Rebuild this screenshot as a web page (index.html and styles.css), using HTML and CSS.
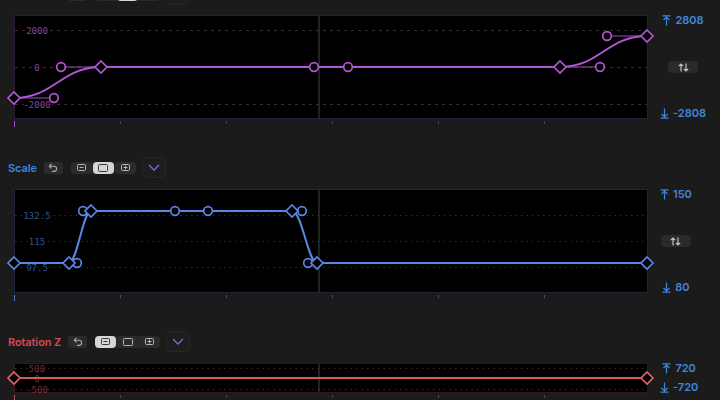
FILE: index.html
```html
<!DOCTYPE html>
<html>
<head>
<meta charset="utf-8">
<link rel="stylesheet" href="styles.css">
</head>
<body>
<div class="page">

  <section class="track purple first">
    <div class="head">
      <span class="label ghost"></span>
      <span class="undo"><svg width="10" height="9" viewBox="0 0 10 9"><path d="M3.5 1 L1.3 3.2 L3.5 5.4 M1.3 3.2 H6 A2.6 2.6 0 0 1 6 8.4 H4" fill="none" stroke="currentColor" stroke-width="1.1"/></svg></span>
      <span class="seg">
        <span class="btn"><svg width="9" height="7" viewBox="0 0 9 7"><rect x="0.5" y="0.5" width="8" height="6" rx="1" fill="none" stroke="currentColor"/><path d="M2.5 3.5 H6.5" stroke="currentColor"/></svg></span>
        <span class="btn on"><svg width="10" height="8" viewBox="0 0 10 8"><rect x="0.5" y="0.5" width="9" height="7" rx="1" fill="none" stroke="currentColor"/></svg></span>
        <span class="btn"><svg width="9" height="7" viewBox="0 0 9 7"><rect x="0.5" y="0.5" width="8" height="6" rx="1" fill="none" stroke="currentColor"/><path d="M2.5 3.5 H6.5 M4.5 1.5 V5.5" stroke="currentColor"/></svg></span>
      </span>
      <span class="drop"><svg width="12" height="7" viewBox="0 0 12 7"><path d="M1 1 L6 6 L11 1" fill="none" stroke="currentColor" stroke-width="1.4"/></svg></span>
    </div>
    <div class="plot-row">
      <svg class="plot tall" width="634" height="104" viewBox="0 0 634 104">
        <rect class="frame" x="0.5" y="0.5" width="633" height="103"/>
        <g class="grid">
          <line x1="1" y1="15.5" x2="633" y2="15.5"/>
          <line x1="1" y1="52.5" x2="633" y2="52.5"/>
          <line x1="1" y1="89.5" x2="633" y2="89.5"/>
        </g>
        <g class="glabel">
          <text x="23" y="18.5">2000</text>
          <text x="23" y="55.5">0</text>
          <text x="23" y="92.5">-2000</text>
        </g>
        <line class="playhead" x1="305" y1="1" x2="305" y2="103"/>
        <g class="handles">
          <line x1="0" y1="83" x2="40" y2="83"/>
          <line x1="47" y1="52" x2="87" y2="52"/>
          <line x1="546" y1="52" x2="586" y2="52"/>
          <line x1="593" y1="21" x2="633" y2="21"/>
        </g>
        <path class="curve" d="M0 83 C40 83 47 52 87 52 L546 52 C586 52 593 21 633 21"/>
        <g class="pts">
          <circle cx="40" cy="83" r="4.3"/>
          <circle cx="47" cy="52" r="4.3"/>
          <circle cx="300" cy="52" r="4.3"/>
          <circle cx="334" cy="52" r="4.3"/>
          <circle cx="586" cy="52" r="4.3"/>
          <circle cx="593" cy="21" r="4.3"/>
          <path d="M0 77 L6 83 L0 89 L-6 83 Z"/>
          <path d="M87 46 L93 52 L87 58 L81 52 Z"/>
          <path d="M546 46 L552 52 L546 58 L540 52 Z"/>
          <path d="M633 15 L639 21 L633 27 L627 21 Z"/>
        </g>
      </svg>
      <div class="side">
        <span class="lim"><svg width="9" height="11" viewBox="0 0 9 11"><path d="M0.5 0.8 H8.5 M4.5 2 V10.5 M1.5 5 L4.5 2 L7.5 5" fill="none" stroke="currentColor" stroke-width="1.2"/></svg>2808</span>
        <span class="swap"><svg width="11" height="9" viewBox="0 0 11 9"><path d="M3 8.5 V1 M0.8 3.2 L3 1 L5.2 3.2 M8 0.5 V8 M5.8 5.8 L8 8 L10.2 5.8" fill="none" stroke="currentColor" stroke-width="1.2"/></svg></span>
        <span class="lim"><svg width="9" height="11" viewBox="0 0 9 11"><path d="M0.5 10.2 H8.5 M4.5 0.5 V9 M1.5 6 L4.5 9 L7.5 6" fill="none" stroke="currentColor" stroke-width="1.2"/></svg>-2808</span>
      </div>
    </div>
    <svg class="ticks" width="634" height="8" viewBox="0 0 634 8">
      <rect x="0" y="2" width="1" height="6" class="t0"/>
      <rect x="106" y="2" width="1" height="3"/>
      <rect x="212" y="2" width="1" height="3"/>
      <rect x="318" y="2" width="1" height="3"/>
      <rect x="424" y="2" width="1" height="3"/>
      <rect x="530" y="2" width="1" height="3"/>
    </svg>
  </section>

  <section class="track blue">
    <div class="head">
      <span class="label">Scale</span>
      <span class="undo"><svg width="10" height="9" viewBox="0 0 10 9"><path d="M3.5 1 L1.3 3.2 L3.5 5.4 M1.3 3.2 H6 A2.6 2.6 0 0 1 6 8.4 H4" fill="none" stroke="currentColor" stroke-width="1.1"/></svg></span>
      <span class="seg">
        <span class="btn"><svg width="9" height="7" viewBox="0 0 9 7"><rect x="0.5" y="0.5" width="8" height="6" rx="1" fill="none" stroke="currentColor"/><path d="M2.5 3.5 H6.5" stroke="currentColor"/></svg></span>
        <span class="btn on"><svg width="10" height="8" viewBox="0 0 10 8"><rect x="0.5" y="0.5" width="9" height="7" rx="1" fill="none" stroke="currentColor"/></svg></span>
        <span class="btn"><svg width="9" height="7" viewBox="0 0 9 7"><rect x="0.5" y="0.5" width="8" height="6" rx="1" fill="none" stroke="currentColor"/><path d="M2.5 3.5 H6.5 M4.5 1.5 V5.5" stroke="currentColor"/></svg></span>
      </span>
      <span class="drop"><svg width="12" height="7" viewBox="0 0 12 7"><path d="M1 1 L6 6 L11 1" fill="none" stroke="currentColor" stroke-width="1.4"/></svg></span>
    </div>
    <div class="plot-row">
      <svg class="plot tall" width="634" height="104" viewBox="0 0 634 104">
        <rect class="frame" x="0.5" y="0.5" width="633" height="103"/>
        <g class="grid">
          <line x1="1" y1="26.5" x2="633" y2="26.5"/>
          <line x1="1" y1="52.5" x2="633" y2="52.5"/>
          <line x1="1" y1="78.5" x2="633" y2="78.5"/>
        </g>
        <g class="glabel">
          <text x="23" y="29.5">132.5</text>
          <text x="23" y="55.5">115</text>
          <text x="23" y="81.5">97.5</text>
        </g>
        <line class="playhead" x1="305" y1="1" x2="305" y2="103"/>
        <g class="handles">
          <line x1="55" y1="74" x2="63" y2="74"/>
          <line x1="69" y1="22" x2="77" y2="22"/>
          <line x1="278" y1="22" x2="288" y2="22"/>
          <line x1="294" y1="74" x2="303" y2="74"/>
        </g>
        <path class="curve" d="M0 74 L55 74 C63 74 69 22 77 22 L278 22 C288 22 294 74 303 74 L633 74"/>
        <g class="pts">
          <circle cx="63" cy="74" r="4.3"/>
          <circle cx="69" cy="22" r="4.3"/>
          <circle cx="161" cy="22" r="4.3"/>
          <circle cx="194" cy="22" r="4.3"/>
          <circle cx="288" cy="22" r="4.3"/>
          <circle cx="294" cy="74" r="4.3"/>
          <path d="M0 68 L6 74 L0 80 L-6 74 Z"/>
          <path d="M55 68 L61 74 L55 80 L49 74 Z"/>
          <path d="M77 16 L83 22 L77 28 L71 22 Z"/>
          <path d="M278 16 L284 22 L278 28 L272 22 Z"/>
          <path d="M303 68 L309 74 L303 80 L297 74 Z"/>
          <path d="M633 68 L639 74 L633 80 L627 74 Z"/>
        </g>
      </svg>
      <div class="side">
        <span class="lim"><svg width="9" height="11" viewBox="0 0 9 11"><path d="M0.5 0.8 H8.5 M4.5 2 V10.5 M1.5 5 L4.5 2 L7.5 5" fill="none" stroke="currentColor" stroke-width="1.2"/></svg>150</span>
        <span class="swap"><svg width="11" height="9" viewBox="0 0 11 9"><path d="M3 8.5 V1 M0.8 3.2 L3 1 L5.2 3.2 M8 0.5 V8 M5.8 5.8 L8 8 L10.2 5.8" fill="none" stroke="currentColor" stroke-width="1.2"/></svg></span>
        <span class="lim"><svg width="9" height="11" viewBox="0 0 9 11"><path d="M0.5 10.2 H8.5 M4.5 0.5 V9 M1.5 6 L4.5 9 L7.5 6" fill="none" stroke="currentColor" stroke-width="1.2"/></svg>80</span>
      </div>
    </div>
    <svg class="ticks" width="634" height="8" viewBox="0 0 634 8">
      <rect x="0" y="2" width="1" height="6" class="t0"/>
      <rect x="106" y="2" width="1" height="3"/>
      <rect x="212" y="2" width="1" height="3"/>
      <rect x="318" y="2" width="1" height="3"/>
      <rect x="424" y="2" width="1" height="3"/>
      <rect x="530" y="2" width="1" height="3"/>
    </svg>
  </section>

  <section class="track red">
    <div class="head">
      <span class="label">Rotation Z</span>
      <span class="undo"><svg width="10" height="9" viewBox="0 0 10 9"><path d="M3.5 1 L1.3 3.2 L3.5 5.4 M1.3 3.2 H6 A2.6 2.6 0 0 1 6 8.4 H4" fill="none" stroke="currentColor" stroke-width="1.1"/></svg></span>
      <span class="seg">
        <span class="btn on"><svg width="9" height="7" viewBox="0 0 9 7"><rect x="0.5" y="0.5" width="8" height="6" rx="1" fill="none" stroke="currentColor"/><path d="M2.5 3.5 H6.5" stroke="currentColor"/></svg></span>
        <span class="btn"><svg width="10" height="8" viewBox="0 0 10 8"><rect x="0.5" y="0.5" width="9" height="7" rx="1" fill="none" stroke="currentColor"/></svg></span>
        <span class="btn"><svg width="9" height="7" viewBox="0 0 9 7"><rect x="0.5" y="0.5" width="8" height="6" rx="1" fill="none" stroke="currentColor"/><path d="M2.5 3.5 H6.5 M4.5 1.5 V5.5" stroke="currentColor"/></svg></span>
      </span>
      <span class="drop"><svg width="12" height="7" viewBox="0 0 12 7"><path d="M1 1 L6 6 L11 1" fill="none" stroke="currentColor" stroke-width="1.4"/></svg></span>
    </div>
    <div class="plot-row">
      <svg class="plot short" width="634" height="30" viewBox="0 0 634 30">
        <rect class="frame" x="0.5" y="0.5" width="633" height="29"/>
        <g class="grid">
          <line x1="1" y1="5.5" x2="633" y2="5.5"/>
          <line x1="1" y1="15.5" x2="633" y2="15.5"/>
          <line x1="1" y1="26.5" x2="633" y2="26.5"/>
        </g>
        <g class="glabel">
          <text x="23" y="8.5">500</text>
          <text x="23" y="18.5">0</text>
          <text x="23" y="29.5">-500</text>
        </g>
        <line class="playhead" x1="305" y1="1" x2="305" y2="29"/>
        <path class="curve" d="M0 15 L633 15"/>
        <g class="pts">
          <path d="M0 9 L6 15 L0 21 L-6 15 Z"/>
          <path d="M633 9 L639 15 L633 21 L627 15 Z"/>
        </g>
      </svg>
      <div class="side">
        <span class="lim"><svg width="9" height="11" viewBox="0 0 9 11"><path d="M0.5 0.8 H8.5 M4.5 2 V10.5 M1.5 5 L4.5 2 L7.5 5" fill="none" stroke="currentColor" stroke-width="1.2"/></svg>720</span>
        <span class="lim"><svg width="9" height="11" viewBox="0 0 9 11"><path d="M0.5 10.2 H8.5 M4.5 0.5 V9 M1.5 6 L4.5 9 L7.5 6" fill="none" stroke="currentColor" stroke-width="1.2"/></svg>-720</span>
      </div>
    </div>
    <svg class="ticks" width="634" height="8" viewBox="0 0 634 8">
      <rect x="0" y="2" width="1" height="6" class="t0"/>
      <rect x="106" y="2" width="1" height="3"/>
      <rect x="212" y="2" width="1" height="3"/>
      <rect x="318" y="2" width="1" height="3"/>
      <rect x="424" y="2" width="1" height="3"/>
      <rect x="530" y="2" width="1" height="3"/>
    </svg>
  </section>

</div>
</body>
</html>
```

FILE: styles.css
```css
html, body {
  margin: 0;
  padding: 0;
  background: #1b1b1b;
  overflow: hidden;
}

.page {
  width: 720px;
  height: 400px;
  padding-left: 8px;
  box-sizing: border-box;
  font-family: Inter, "Liberation Sans", sans-serif;
  overflow: hidden;
}

.track {
  display: flex;
  flex-direction: column;
  margin-bottom: 30px;
}

.track.first {
  margin-top: -16px;
}

.track.first .plot-row {
  margin-top: 10px;
}

.head {
  display: flex;
  align-items: center;
  height: 21px;
}

.label {
  font-size: 11px;
  font-weight: 600;
  margin-right: 7px;
  letter-spacing: -0.1px;
}

.label.ghost {
  width: 53px;
}

.undo {
  width: 19px;
  height: 12px;
  border-radius: 3px;
  background: #2b2b2b;
  color: #a8a8a8;
  display: flex;
  align-items: center;
  justify-content: center;
  margin-right: 8px;
}

.seg {
  display: flex;
  gap: 1px;
  background: #262626;
  border-radius: 4px;
  height: 12px;
}

.btn {
  width: 21px;
  height: 12px;
  border-radius: 4px;
  display: flex;
  align-items: center;
  justify-content: center;
  color: #b4b4b4;
  background: #2b2b2b;
}

.btn.on {
  background: #d6d6d6;
  color: #3a3a3a;
}

.drop {
  width: 24px;
  height: 21px;
  box-sizing: border-box;
  margin-left: 6px;
  border: 1px solid #262626;
  background: #1d1d1d;
  border-radius: 5px;
  display: flex;
  align-items: center;
  justify-content: center;
  color: #7a66e0;
}

.plot-row {
  display: flex;
  gap: 12px;
  margin-top: 11px;
}

.plot {
  display: block;
  margin-left: 6px;
  overflow: visible;
  flex: none;
}

.frame {
  fill: #000;
  stroke-width: 1;
}

.grid line {
  stroke-width: 1;
  stroke-dasharray: 1.5 4;
}

.glabel text {
  font-family: "DejaVu Sans Mono", "Liberation Mono", monospace;
  font-size: 9px;
  text-anchor: middle;
  stroke: #000;
  stroke-width: 3px;
  paint-order: stroke;
}

.playhead {
  stroke: #454545;
  stroke-width: 1;
}

.handles line {
  stroke-width: 1;
}

.curve {
  fill: none;
  stroke-width: 2;
}

.pts circle, .pts path {
  fill: #000;
  stroke-width: 1.7;
}

.side {
  display: flex;
  flex-direction: column;
  justify-content: space-between;
  align-items: center;
}

.lim {
  display: flex;
  align-items: center;
  gap: 4px;
  height: 11px;
  font-size: 11px;
  font-weight: 600;
  color: #3e88dc;
  line-height: 11px;
}

.swap {
  width: 30px;
  height: 12px;
  border-radius: 4px;
  background: #2a2a2a;
  color: #c4c4c4;
  display: flex;
  align-items: center;
  justify-content: center;
}

.ticks {
  display: block;
  margin-left: 6px;
}

/* purple track */
.purple .label { color: #b054d0; }
.purple .frame { stroke: #2e1c36; }
.purple .grid line { stroke: #3e2648; stroke-dasharray: 3 4; }
.purple .glabel text { fill: #83489a; }
.purple .handles line { stroke: #9c4cbc; }
.purple .curve { stroke: #b356d6; }
.purple .pts circle, .purple .pts path { stroke: #b356d6; }
.purple .ticks rect { fill: #5c3670; }
.purple .ticks .t0 { fill: #a050c2; }

/* blue track */
.blue .label { color: #3b86dc; }
.blue .frame { stroke: #1d2538; }
.blue .grid line { stroke: #2c2c2c; }
.blue .glabel text { fill: #2e5a92; }
.blue .handles line { stroke: #5b85e2; }
.blue .curve { stroke: #5b86e4; }
.blue .pts circle, .blue .pts path { stroke: #5b86e4; }
.blue .ticks rect { fill: #34507e; }
.blue .ticks .t0 { fill: #4a76c8; }

/* red track */
.red .label { color: #d24c54; }
.red .frame { stroke: #30181c; }
.red .grid line { stroke: #3a2628; }
.red .glabel text { fill: #7e2c34; stroke: none; }
.red .curve { stroke: #d45a5c; }
.red .pts circle, .red .pts path { stroke: #e06262; }
.red .ticks rect { fill: #7a3438; }
.red .ticks .t0 { fill: #c04a50; }
```
